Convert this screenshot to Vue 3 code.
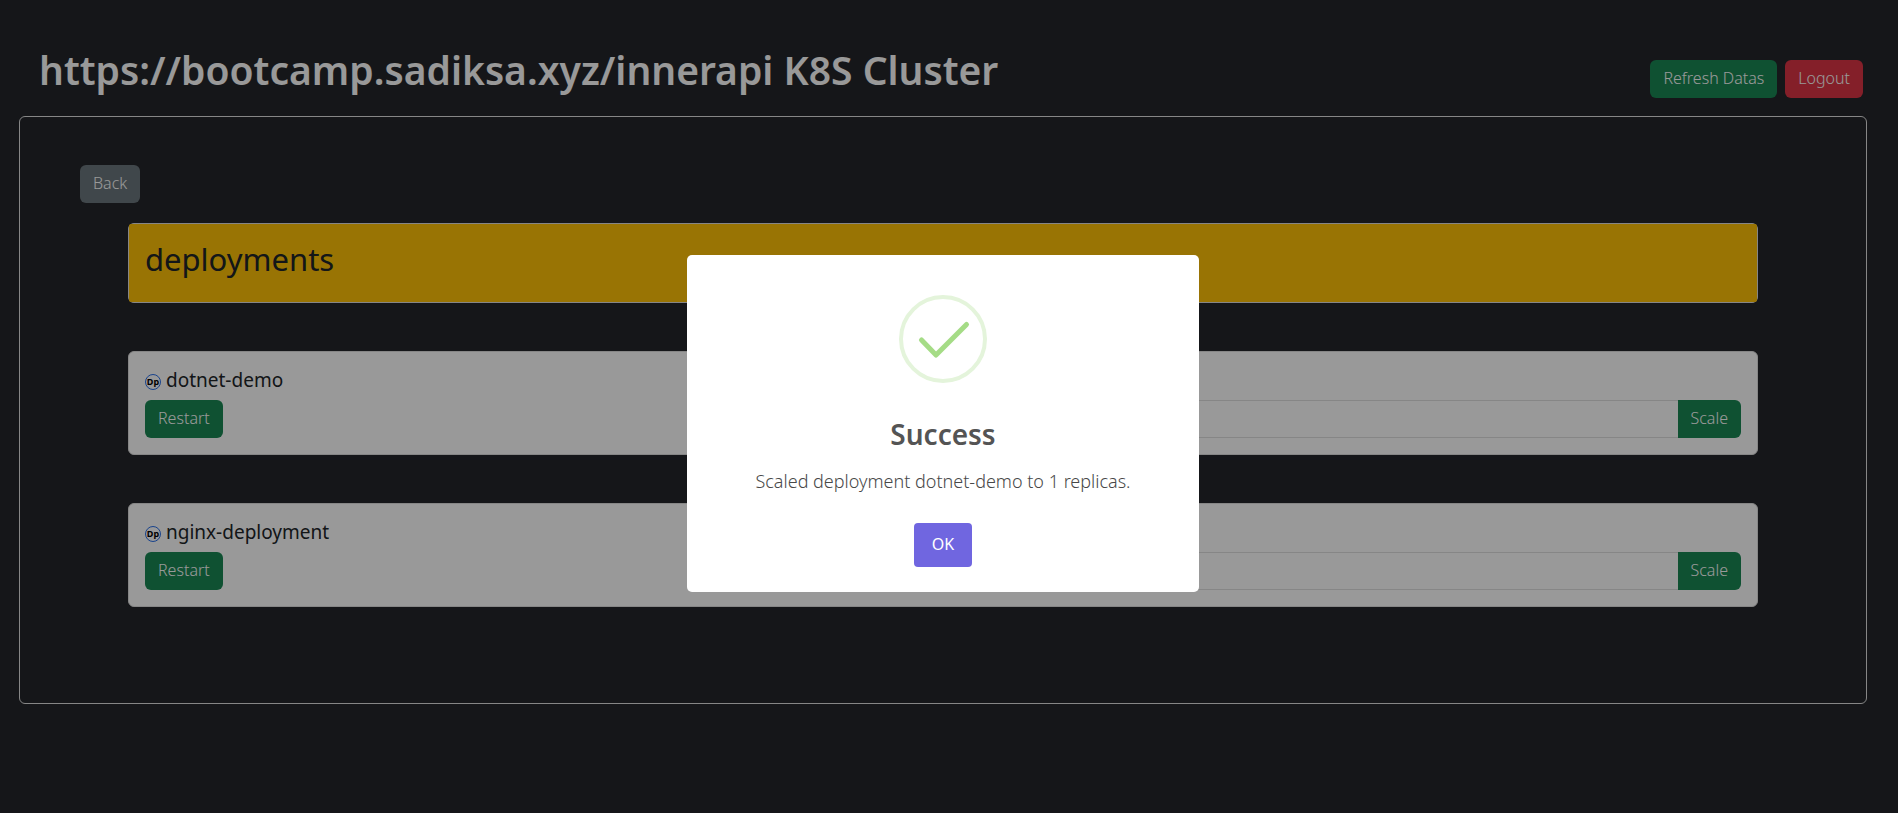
<script setup>
import { ref, reactive } from 'vue'

const cluster = 'https://bootcamp.sadiksa.xyz/innerapi'
const deployments = reactive([
  { name: 'dotnet-demo', replicas: '' },
  { name: 'nginx-deployment', replicas: '' },
])
const dialog = ref({ title: 'Success', text: 'Scaled deployment dotnet-demo to 1 replicas.' })
</script>

<template>
  <div class="page">
    <header class="header">
      <h1>{{ cluster }} K8S Cluster</h1>
      <div class="actions">
        <button type="button" class="btn green refresh">Refresh Datas</button>
        <button type="button" class="btn red logout">Logout</button>
      </div>
    </header>

    <main class="frame">
      <button type="button" class="btn grey">Back</button>
      <div class="list">
        <section class="card">
          <h2 class="banner">deployments</h2>
        </section>
        <section v-for="d in deployments" :key="d.name" class="card item">
          <h5>
            <svg class="dp" viewBox="0 0 16 16" aria-hidden="true">
              <circle cx="8" cy="8" r="7.5" fill="none" stroke="#2a70ea" />
              <text x="8" y="11" text-anchor="middle">Dp</text>
            </svg>
            <span>{{ d.name }}</span>
          </h5>
          <div class="row">
            <div class="col">
              <button type="button" class="btn green restart">Restart</button>
            </div>
            <div class="col scale">
              <input v-model="d.replicas" type="text" :aria-label="'Replicas of ' + d.name" />
              <button type="button" class="btn green scale-btn">Scale</button>
            </div>
          </div>
        </section>
      </div>
    </main>
  </div>

  <div v-if="dialog" class="overlay">
    <div class="modal" role="dialog" aria-modal="true" aria-labelledby="dialog-title">
      <svg class="check" viewBox="0 0 88 88" fill="none" aria-hidden="true">
        <circle cx="44" cy="44" r="42" stroke="#e4f4db" stroke-width="4" />
        <path d="M22.5 45 37 60 67.5 29.5" stroke="#a5dc86" stroke-width="5" stroke-linecap="round" stroke-linejoin="round" />
      </svg>
      <h2 id="dialog-title">{{ dialog.title }}</h2>
      <p>{{ dialog.text }}</p>
      <button type="button" class="ok" @click="dialog = null">OK</button>
    </div>
  </div>
</template>

<style>
body {
  background: #23252a;
}
</style>

<style scoped>
.page,
.overlay {
  font-family: 'Noto Sans', 'Open Sans', sans-serif;
  font-size: 16px;
  line-height: 24px;
  box-sizing: border-box;
}
.page {
  padding: 46px 31px 48px 19px;
  color: #212529;
}
h1,
h2,
h5,
p {
  margin: 0;
}
button,
input {
  font: inherit;
  box-sizing: border-box;
}
.header {
  display: flex;
  justify-content: space-between;
  height: 52px;
  padding: 0 4px 18px 20px;
}
h1 {
  color: #fff;
  font-size: 39px;
  line-height: 48px;
  font-weight: 600;
  white-space: nowrap;
}
.actions {
  display: flex;
  align-items: flex-end;
  gap: 8px;
}
.btn {
  height: 38px;
  padding: 0 13px 2px;
  border: 0;
  border-radius: 6px;
  color: #fff;
  font-weight: 300;
  white-space: nowrap;
}
.green {
  background: #198754;
}
.red {
  background: #dc3545;
}
.grey {
  background: #6c777d;
}
.frame {
  padding: 48px 60px;
  border: 1px solid #dfdfdf;
  border-radius: 6px;
}
.list {
  display: flex;
  flex-direction: column;
  gap: 48px;
  padding: 20px 48px 48px;
}
.card {
  background: #fff;
  border: 1px solid #dfdfdf;
  border-radius: 6px;
}
.banner {
  padding: 16px 16px 24px;
  background: #ffc107;
  border-radius: 2px;
  font-size: 31px;
  line-height: 38px;
  font-weight: 400;
}
.item {
  padding: 16px;
}
h5 {
  display: flex;
  align-items: center;
  gap: 5px;
  margin-bottom: 8px;
  font-size: 19px;
  line-height: 24px;
  font-weight: 400;
}
.dp {
  width: 16px;
  height: 16px;
  margin-top: 4px;
}
.dp text {
  font-size: 9px;
  font-weight: 700;
  fill: #000;
}
.row {
  display: flex;
}
.col {
  flex: 1;
  display: flex;
}
.scale input {
  flex: 1;
  min-width: 0;
  height: 38px;
  padding: 6px 12px;
  border: 1px solid #dfdfdf;
  border-right: 0;
  border-radius: 6px 0 0 6px;
  background: #fff;
}
.scale-btn {
  border-radius: 0 6px 6px 0;
}
.overlay {
  position: fixed;
  inset: 0;
  display: flex;
  align-items: center;
  justify-content: center;
  padding: 34px 12px 0 0;
  background: rgba(0, 0, 0, 0.4);
}
.modal {
  display: flex;
  flex-direction: column;
  align-items: center;
  box-sizing: border-box;
  width: 512px;
  padding: 40px 20px 25px;
  border-radius: 5px;
  background: #fff;
  color: #545454;
}
.check {
  width: 88px;
  height: 88px;
}
.modal h2 {
  margin-top: 28px;
  font-size: 28px;
  line-height: 46px;
  font-weight: 600;
  color: #545454;
}
.modal p {
  margin: 10px 0 28px;
  font-size: 18px;
  line-height: 28px;
  font-weight: 300;
  color: #484848;
}
.ok {
  height: 44px;
  min-width: 58px;
  padding: 0 16px 2px;
  border: 0;
  border-radius: 4px;
  background: #7066e0;
  color: #fff;
  font-size: 16px;
}
</style>
